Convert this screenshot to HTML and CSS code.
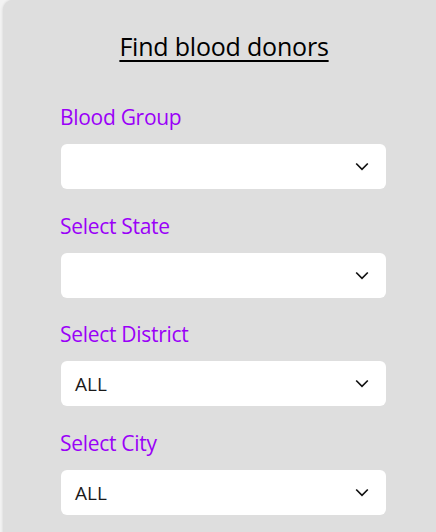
FILE: index.html
```html
<!DOCTYPE html>
<html>
<head>
<meta charset="utf-8">
<link rel="stylesheet" href="styles.css">
</head>
<body>
<div class="panel">
  <h1 class="title">Find blood donors</h1>
  <div class="field">
    <div class="label">Blood Group</div>
    <div class="select"><span class="value"></span><svg class="chev" width="14" height="9" viewBox="0 0 14 9"><path d="M1.2 1.5 L7 7.3 L12.8 1.5" fill="none" stroke="#111" stroke-width="1.7"/></svg></div>
  </div>
  <div class="field">
    <div class="label">Select State</div>
    <div class="select"><span class="value"></span><svg class="chev" width="14" height="9" viewBox="0 0 14 9"><path d="M1.2 1.5 L7 7.3 L12.8 1.5" fill="none" stroke="#111" stroke-width="1.7"/></svg></div>
  </div>
  <div class="field">
    <div class="label">Select District</div>
    <div class="select"><span class="value">ALL</span><svg class="chev" width="14" height="9" viewBox="0 0 14 9"><path d="M1.2 1.5 L7 7.3 L12.8 1.5" fill="none" stroke="#111" stroke-width="1.7"/></svg></div>
  </div>
  <div class="field">
    <div class="label">Select City</div>
    <div class="select"><span class="value">ALL</span><svg class="chev" width="14" height="9" viewBox="0 0 14 9"><path d="M1.2 1.5 L7 7.3 L12.8 1.5" fill="none" stroke="#111" stroke-width="1.7"/></svg></div>
  </div>
</div>
</body>
</html>
```
FILE: styles.css
```css
html, body {
  margin: 0;
  padding: 0;
  background: #f3f3f3;
  overflow: hidden;
  height: 532px;
}
body {
  font-family: "Open Sans", "Noto Sans", sans-serif;
}
.panel {
  margin-left: 3px;
  width: 442px;
  height: 560px;
  background: #dedede;
  border-radius: 10px 10px 0 0;
  box-shadow: 0 0 3px rgba(0,0,0,0.15);
  padding: 29px 0 0 57px;
  box-sizing: border-box;
}
.title {
  margin: 0 0 0 -57px;
  text-align: center;
  font-size: 25px;
  font-weight: 400;
  line-height: 34px;
  text-decoration: underline;
  text-decoration-thickness: 2px;
  text-underline-offset: 4px;
  color: #000;
  letter-spacing: -0.2px;
}
.field {
  display: flex;
  flex-direction: column;
  gap: 13px;
  margin-bottom: 22.7px;
}
.field:first-of-type {
  margin-top: 40px;
}
.label {
  color: #9a00f8;
  font-size: 21px;
  font-weight: 500;
  line-height: 28px;
  letter-spacing: -0.3px;
}
.select {
  width: 325px;
  height: 45px;
  margin-left: 1px;
  background: #fff;
  border-radius: 6px;
  display: flex;
  align-items: center;
  justify-content: space-between;
  padding: 0 17px 0 14px;
  box-sizing: border-box;
}
.value {
  font-size: 19px;
  color: #1a1a1a;
}
.chev {
  display: block;
}
```
